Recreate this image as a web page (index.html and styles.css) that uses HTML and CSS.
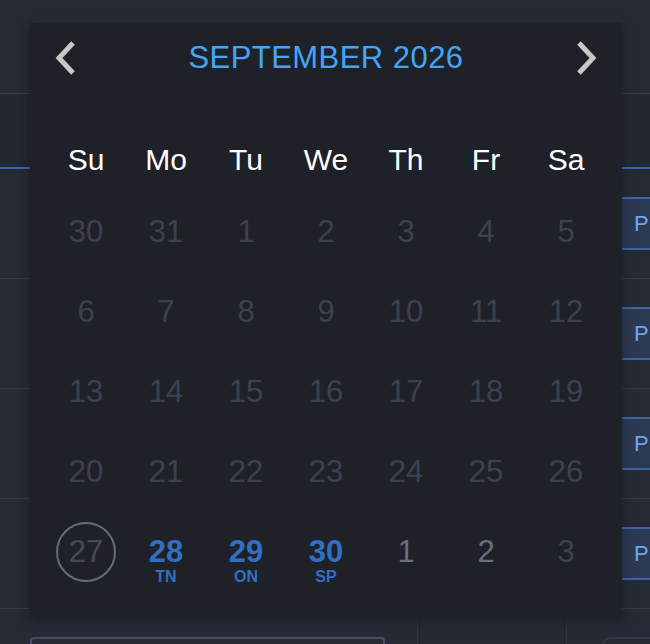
FILE: index.html
```html
<!DOCTYPE html>
<html lang="en">
<head>
<meta charset="utf-8">
<title>Calendar</title>
<link rel="stylesheet" href="styles.css">
</head>
<body>
<div class="page">
  <div class="topbar"></div>
  <div class="headrow"></div>
  <div class="row"><div class="pill">P</div></div>
  <div class="row"><div class="pill">P</div></div>
  <div class="row"><div class="pill">P</div></div>
  <div class="row"><div class="pill">P</div></div>
  <div class="footer">
    <div class="fcol fcol-a"><div class="input"></div></div>
    <div class="fcol fcol-b"></div>
    <div class="fcol fcol-c"><div class="chip"></div></div>
  </div>
</div>

<div class="picker">
  <div class="picker-head">
    <button class="nav" aria-label="Previous month">
      <svg width="24" height="36" viewBox="0 0 24 36"><path d="M20 3 L6 18 L20 33" fill="none" stroke="#c8c8c8" stroke-width="5"/></svg>
    </button>
    <div class="title">SEPTEMBER 2026</div>
    <button class="nav" aria-label="Next month">
      <svg width="24" height="36" viewBox="0 0 24 36"><path d="M4 3 L18 18 L4 33" fill="none" stroke="#c8c8c8" stroke-width="5"/></svg>
    </button>
  </div>
  <div class="weekdays">
    <div>Su</div><div>Mo</div><div>Tu</div><div>We</div><div>Th</div><div>Fr</div><div>Sa</div>
  </div>
  <div class="days">
    <div class="d muted">30</div><div class="d muted">31</div><div class="d muted">1</div><div class="d muted">2</div><div class="d muted">3</div><div class="d muted">4</div><div class="d muted">5</div>
    <div class="d muted">6</div><div class="d muted">7</div><div class="d muted">8</div><div class="d muted">9</div><div class="d muted">10</div><div class="d muted">11</div><div class="d muted">12</div>
    <div class="d muted">13</div><div class="d muted">14</div><div class="d muted">15</div><div class="d muted">16</div><div class="d muted">17</div><div class="d muted">18</div><div class="d muted">19</div>
    <div class="d muted">20</div><div class="d muted">21</div><div class="d muted">22</div><div class="d muted">23</div><div class="d muted">24</div><div class="d muted">25</div><div class="d muted">26</div>
    <div class="d today"><span class="ring">27</span></div>
    <div class="d event"><span class="num">28</span><span class="tag">TN</span></div>
    <div class="d event"><span class="num">29</span><span class="tag">ON</span></div>
    <div class="d event"><span class="num">30</span><span class="tag">SP</span></div>
    <div class="d next">1</div><div class="d next">2</div><div class="d muted">3</div>
  </div>
</div>
</body>
</html>
```
FILE: styles.css
```css
html, body {
  margin: 0;
  padding: 0;
}
body {
  width: 650px;
  height: 644px;
  overflow: hidden;
  background: #262a35;
  font-family: "Liberation Sans", Arial, Helvetica, sans-serif;
  position: relative;
}
.page {
  display: flex;
  flex-direction: column;
}
.topbar {
  height: 94px;
  box-sizing: border-box;
  border-bottom: 1px solid #363b48;
}
.headrow {
  height: 75px;
  box-sizing: border-box;
  border-bottom: 2px solid #3567ad;
  background: #232731;
}
.row {
  height: 110px;
  box-sizing: border-box;
  border-bottom: 1px solid #353a47;
  display: flex;
  justify-content: flex-end;
  align-items: flex-start;
  overflow: hidden;
}
.pill {
  margin-top: 28px;
  width: 28px;
  height: 53px;
  box-sizing: border-box;
  border-top: 2px solid #3c65a3;
  border-bottom: 2px solid #3c65a3;
  background: #2c3952;
  color: #70a5ee;
  font-size: 22px;
  line-height: 49px;
  padding-left: 12px;
  overflow: hidden;
}
.footer {
  display: grid;
  grid-template-columns: 417px 149px 1fr;
  height: 40px;
}
.fcol-b, .fcol-c {
  border-left: 1px solid #30343f;
}
.input {
  margin: 28px 0 0 30px;
  width: 355px;
  height: 30px;
  box-sizing: border-box;
  border: 2px solid #454e65;
  border-radius: 4px;
}
.chip {
  margin: 28px 0 0 34px;
  height: 30px;
  border: 2px solid #353a46;
  border-right: none;
  border-radius: 10px 0 0 0;
}

.picker {
  position: absolute;
  left: 30px;
  top: 23px;
  width: 592px;
  height: 594px;
  box-sizing: border-box;
  padding: 0 16px;
  background: #1f2129;
  box-shadow: 0 4px 10px rgba(0, 0, 0, 0.35);
}
.picker-head {
  height: 70px;
  display: flex;
  align-items: center;
  justify-content: space-between;
  padding: 0 7px 0 7px;
}
.nav {
  background: none;
  border: 0;
  padding: 0;
  width: 24px;
  height: 36px;
  display: flex;
}
.title {
  color: #42a5f5;
  font-size: 31px;
  letter-spacing: 0.45px;
}
.weekdays {
  margin-top: 35px;
  display: grid;
  grid-template-columns: repeat(7, 80px);
  height: 64px;
  align-items: center;
  justify-items: center;
  color: #ffffff;
  font-size: 30px;
}
.days {
  display: grid;
  grid-template-columns: repeat(7, 80px);
  grid-auto-rows: 80px;
}
.d {
  display: flex;
  flex-direction: column;
  align-items: center;
  justify-content: center;
  font-size: 31px;
}
.muted {
  color: #3d414d;
}
.next {
  color: #6a6f7b;
}
.ring {
  width: 56px;
  height: 56px;
  border: 2px solid #676b77;
  border-radius: 50%;
  display: flex;
  align-items: center;
  justify-content: center;
  color: #464a56;
}
.event {
  color: #2f6fc4;
  font-weight: bold;
  padding-top: 15px;
}
.num {
  font-size: 31px;
  line-height: 34px;
}
.tag {
  font-size: 16px;
  line-height: 15px;
}
```
